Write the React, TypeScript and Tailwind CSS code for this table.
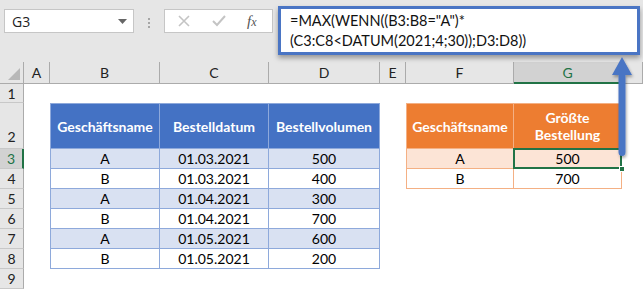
import React from "react";

interface IOrder {
    name: string,
    date: string,
    volume: number,
}

const orders: IOrder[] = [
    { name: "A", date: "01.03.2021", volume: 500 },
    { name: "B", date: "01.03.2021", volume: 400 },
    { name: "A", date: "01.04.2021", volume: 300 },
    { name: "B", date: "01.04.2021", volume: 700 },
    { name: "A", date: "01.05.2021", volume: 600 },
    { name: "B", date: "01.05.2021", volume: 200 },
];

const columns = ["A", "B", "C", "D", "E", "F", "G", ""];
const rows = [1, 2, 3, 4, 5, 6, 7, 8, 9];

const cellFont = { fontFamily: "Lato, 'Liberation Sans', sans-serif" };

const FormulaBar: React.FC = (): JSX.Element => {
    return (
        <div className="h-[62px] bg-[#e6e6e6] flex items-start relative">
            {/* name box */}
            <div className="mt-[9px] ml-[4px] w-[130px] h-[24px] bg-white border border-[#c6c6c6] flex items-center justify-between pl-[7px] pr-[6px]">
                <span className="text-[14px] text-[#222]" style={{ fontFamily: "'Open Sans', sans-serif" }}>G3</span>
                <svg width="9" height="5" viewBox="0 0 9 5"><path d="M0 0 L9 0 L4.5 5 Z" fill="#666" /></svg>
            </div>
            <div className="mt-[18px] ml-[14px] flex flex-col gap-[2px]">
                <div className="w-[2px] h-[2px] bg-[#a6a6a6]" />
                <div className="w-[2px] h-[2px] bg-[#a6a6a6]" />
                <div className="w-[2px] h-[2px] bg-[#a6a6a6]" />
            </div>
            {/* cancel / enter / fx */}
            <div className="mt-[9px] ml-[14px] w-[109px] h-[24px] bg-white border border-[#c6c6c6] flex items-center">
                <svg className="ml-[13px]" width="12" height="12" viewBox="0 0 12 12">
                    <path d="M1 1 L11 11 M11 1 L1 11" stroke="#c4c4c4" strokeWidth="1.6" />
                </svg>
                <svg className="ml-[22px]" width="14" height="12" viewBox="0 0 14 12">
                    <path d="M1 6 L5 10 L13 1" stroke="#c4c4c4" strokeWidth="2" fill="none" />
                </svg>
                <span className="ml-[21px] text-[15px] italic text-[#555]" style={{ fontFamily: "'Liberation Serif', serif" }}>
                    f<span className="text-[12px]">x</span>
                </span>
            </div>
            {/* formula input */}
            <div className="mt-[6px] ml-[5px] w-[362px] h-[49px] bg-white border-[3px] border-[#4a75c4] shadow-[0_3px_5px_rgba(0,0,0,0.35)] pl-[9px] pt-[2px] text-[14.5px] leading-[20px] text-[#111]" style={{ fontFamily: "Lato, 'Open Sans', sans-serif" }}>
                <div>=MAX(WENN((B3:B8="A")*</div>
                <div>(C3:C8&lt;DATUM(2021;4;30));D3:D8))</div>
            </div>
        </div>
    );
}

const Sheet: React.FC = (): JSX.Element => {
    return (
        <div className="grid grid-cols-[24px_26px_110px_109px_111px_26px_108px_108px_21px] grid-rows-[22px_19px_46px_repeat(7,20px)] bg-white text-[14px]" style={cellFont}>
            {/* corner */}
            <div className="bg-[#e6e6e6] border-r border-b border-[#ababab] flex items-end justify-end p-[3px]">
                <svg width="12" height="12" viewBox="0 0 12 12"><path d="M12 0 L12 12 L0 12 Z" fill="#b8b8b8" /></svg>
            </div>
            {columns.map((col: string, index: number) => {
                const active = col === "G";
                return (
                    <div
                        key={index}
                        className={active
                            ? "bg-[#d2d2d2] border-r border-[#ababab] border-b-2 border-b-[#217346] text-[#217346] flex items-center justify-center"
                            : "bg-[#e6e6e6] border-r border-b border-[#ababab] text-[#222] flex items-center justify-center"}
                    >
                        {col}
                    </div>
                )
            })}

            {/* row headers */}
            {rows.map((row: number) => {
                const active = row === 3;
                return (
                    <div
                        key={row}
                        style={{ gridColumn: 1, gridRow: row + 1 }}
                        className={active
                            ? "bg-[#d2d2d2] border-b border-[#c8c8c8] border-r-2 border-r-[#217346] text-[#217346] flex items-center justify-center"
                            : `bg-[#e6e6e6] border-b border-[#c8c8c8] border-r border-r-[#ababab] text-[#222] flex justify-center ${row === 2 ? "items-end pb-[1px]" : "items-center"}`}
                    >
                        {row}
                    </div>
                )
            })}

            {/* order table B2:D8 */}
            <div className="col-start-3 col-end-6 row-start-3 row-end-10 border-l border-t border-[#8ea9db] grid grid-cols-[109px_109px_111px] grid-rows-[45px_repeat(6,20px)] text-black">
                {["Geschäftsname", "Bestelldatum", "Bestellvolumen"].map((title: string) => (
                    <div key={title} className="bg-[#4472c4] border-r border-b border-[#8ea9db] text-white font-bold flex items-center justify-center">
                        {title}
                    </div>
                ))}
                {orders.map((order: IOrder, index: number) => {
                    const band = index % 2 === 0 ? "bg-[#d9e1f2]" : "bg-white";
                    return (
                        <React.Fragment key={index}>
                            <div className={`${band} border-r border-b border-[#8ea9db] flex items-center justify-center`}>{order.name}</div>
                            <div className={`${band} border-r border-b border-[#8ea9db] flex items-center justify-center`}>{order.date}</div>
                            <div className={`${band} border-r border-b border-[#8ea9db] flex items-center justify-center`}>{order.volume}</div>
                        </React.Fragment>
                    )
                })}
            </div>

            {/* result table F2:G4 */}
            <div className="col-start-7 col-end-9 row-start-3 row-end-6 border-l border-t border-[#f4b084] grid grid-cols-[107px_108px] grid-rows-[45px_20px_20px] text-black">
                <div className="bg-[#ed7d31] border-r border-b border-[#f4b084] text-white font-bold flex items-center justify-center">Geschäftsname</div>
                <div className="bg-[#ed7d31] border-r border-b border-[#f4b084] text-white font-bold flex flex-col items-center justify-center leading-[17px]">
                    <span>Größte</span>
                    <span>Bestellung</span>
                </div>
                <div className="bg-[#fce4d6] border-r border-b border-[#f4b084] flex items-center justify-center">A</div>
                <div className="relative bg-[#fce4d6] border-r border-b border-[#f4b084] flex items-center justify-center">
                    500
                    <div className="absolute -left-[1px] -top-[1px] -right-[1px] -bottom-[1px] border-2 border-[#217346]" />
                    <div className="absolute -right-[4px] -bottom-[4px] w-[6px] h-[6px] bg-[#217346] border border-white" />
                </div>
                <div className="bg-white border-r border-b border-[#f4b084] flex items-center justify-center">B</div>
                <div className="bg-white border-r border-b border-[#f4b084] flex items-center justify-center">700</div>
            </div>
        </div>
    );
}

const App: React.FC = (): JSX.Element => {
    return (
        <div className="w-[643px] h-[289px] overflow-hidden relative bg-white">
            <FormulaBar />
            <Sheet />
            {/* callout arrow pointing at the formula */}
            <svg className="absolute left-[606px] top-[54px]" width="32" height="112" viewBox="0 0 32 112">
                <defs>
                    <filter id="arrowShadow" x="-50%" y="-20%" width="200%" height="140%">
                        <feDropShadow dx="1" dy="2" stdDeviation="1.5" floodColor="#000" floodOpacity="0.35" />
                    </filter>
                </defs>
                <g filter="url(#arrowShadow)">
                    <path d="M16 3 L26 21 L19.5 21 L19.5 98 Q19.5 102 16 102 Q12.5 102 12.5 98 L12.5 21 L6 21 Z" fill="#4a75c4" />
                </g>
            </svg>
        </div>
    );
}

export default App
